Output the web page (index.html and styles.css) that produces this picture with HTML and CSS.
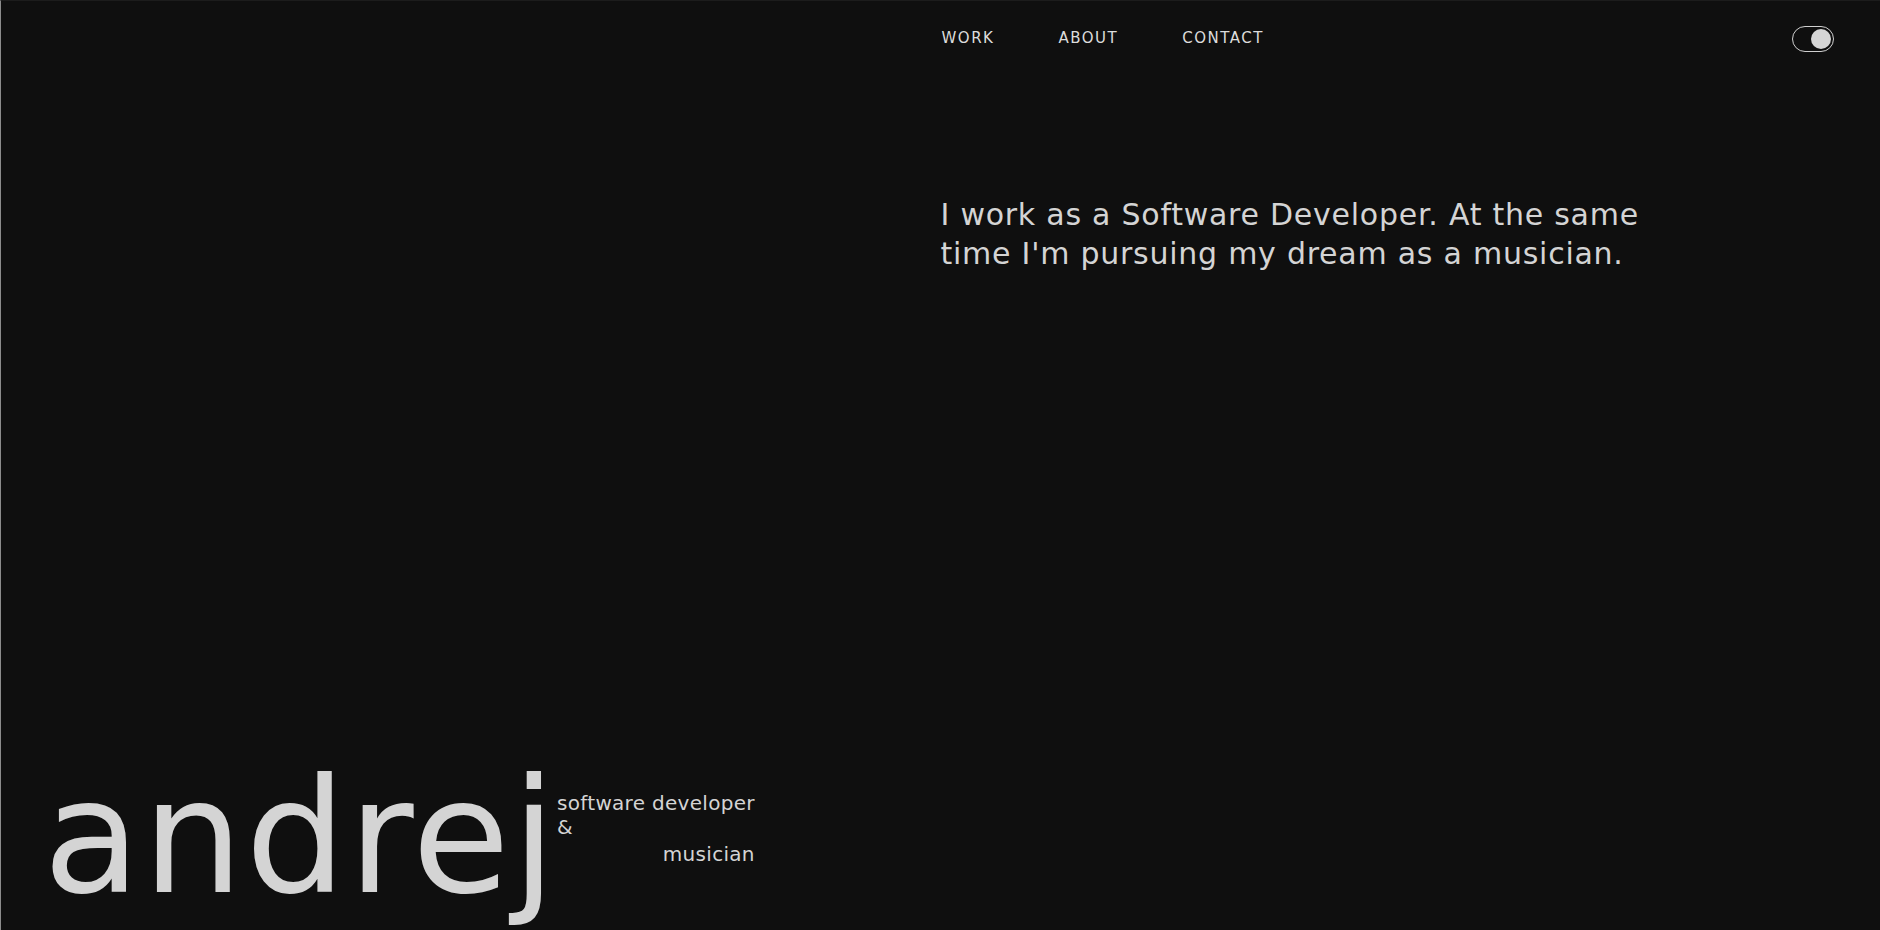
FILE: index.html
```html
<!DOCTYPE html>
<html lang="en">
<head>
<meta charset="utf-8">
<title>andrej</title>
<link rel="stylesheet" href="styles.css">
</head>
<body>
<div class="page">
  <header class="header">
    <div class="header-left"></div>
    <div class="header-right">
      <nav class="nav">
        <a class="nav-link" href="#work">WORK</a>
        <a class="nav-link" href="#about">ABOUT</a>
        <a class="nav-link" href="#contact">CONTACT</a>
      </nav>
      <button class="toggle" type="button" aria-label="Toggle theme"><span class="toggle-knob"></span></button>
    </div>
  </header>
  <main class="main">
    <div class="main-left"></div>
    <p class="intro">I work as a Software Developer. At the same time I'm pursuing my dream as a musician.</p>
  </main>
  <footer class="hero">
    <h1 class="name">andrej</h1>
    <div class="roles">
      <span class="role">software developer</span>
      <span class="role">&amp;</span>
      <span class="role role-end">musician</span>
    </div>
  </footer>
</div>
</body>
</html>
```
FILE: styles.css
```css
* { box-sizing: border-box; }
html, body { margin: 0; padding: 0; }
body {
  background: #0f0f0f;
  color: #d4d4d4;
  font-family: "DejaVu Sans", "Liberation Sans", sans-serif;
  overflow: hidden;
}
.page {
  height: 100vh;
  display: flex;
  flex-direction: column;
  border-left: 1px solid #8c8c8c;
  border-top: 1px solid #1c1c1c;
}
.header {
  display: grid;
  grid-template-columns: 1fr 1fr;
  height: 74px;
}
.header-right {
  display: flex;
  align-items: center;
  justify-content: space-between;
  padding-right: 46px;
}
.nav {
  display: flex;
  gap: 64px;
  padding-left: 1px;
}
.nav-link {
  color: #dcdcdc;
  text-decoration: none;
  font-size: 15px;
  letter-spacing: 1.5px;
}
.toggle {
  width: 42px;
  height: 26px;
  margin-top: 1px;
  border: 1px solid #cfcfcf;
  border-radius: 13px;
  background: transparent;
  padding: 0 2px;
  display: flex;
  align-items: center;
  justify-content: flex-end;
}
.toggle-knob {
  width: 20px;
  height: 20px;
  border-radius: 50%;
  background: #d6d6d6;
}
.main {
  display: grid;
  grid-template-columns: 1fr 1fr;
}
.intro {
  margin: 120px 0 0 0;
  max-width: 730px;
  font-size: 30px;
  line-height: 39px;
  letter-spacing: 0.75px;
  color: #d4d4d4;
}
.hero {
  margin-top: auto;
  display: flex;
  align-items: flex-start;
  padding: 0 0 14px 42px;
}
.name {
  margin: 0;
  font-size: 159px;
  line-height: 159px;
  letter-spacing: 2px;
  font-weight: normal;
  color: #d4d4d4;
}
.roles {
  display: flex;
  flex-direction: column;
  margin: 34px 0 0 -1px;
  font-size: 20px;
  line-height: 24px;
  letter-spacing: 0.3px;
  color: #d4d4d4;
}
.role-end {
  align-self: flex-end;
  margin-top: 3px;
}
```
